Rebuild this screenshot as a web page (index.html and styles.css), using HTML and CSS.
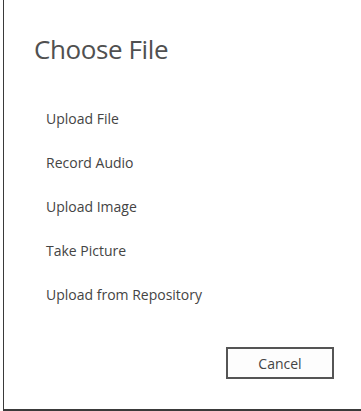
FILE: index.html
```html
<!DOCTYPE html>
<html>
<head>
<meta charset="utf-8">
<link rel="stylesheet" href="styles.css">
</head>
<body>
<div class="dialog">
  <h1 class="title">Choose File</h1>
  <ul class="options">
    <li class="option">Upload File</li>
    <li class="option">Record Audio</li>
    <li class="option">Upload Image</li>
    <li class="option">Take Picture</li>
    <li class="option">Upload from Repository</li>
  </ul>
  <div class="actions">
    <button class="btn">Cancel</button>
  </div>
</div>
</body>
</html>
```
FILE: styles.css
```css
html, body {
  margin: 0;
  padding: 0;
  background: #fff;
}
body {
  width: 361px;
  height: 411px;
  overflow: hidden;
  font-family: "Open Sans", "Noto Sans", sans-serif;
}
.dialog {
  margin-left: 3px;
  height: 409px;
  border-left: 1px solid #3a3a3a;
  border-bottom: 2px solid #3a3a3a;
  display: flex;
  flex-direction: column;
}
.title {
  margin: 0;
  padding: 31px 0 0 30px;
  font-size: 26px;
  font-weight: 400;
  line-height: 36px;
  color: #505050;
  letter-spacing: -0.4px;
}
.options {
  list-style: none;
  margin: 0;
  padding: 42px 0 0 42px;
  display: flex;
  flex-direction: column;
  gap: 24px;
}
.option {
  font-size: 14px;
  line-height: 20px;
  color: #444;
}
.actions {
  display: flex;
  justify-content: flex-end;
  padding: 42px 27px 0 0;
}
.btn {
  width: 108px;
  height: 32px;
  border: 2px solid #555;
  background: #fdfdfd;
  font-family: inherit;
  font-size: 14px;
  color: #444;
  padding: 0;
}
```
